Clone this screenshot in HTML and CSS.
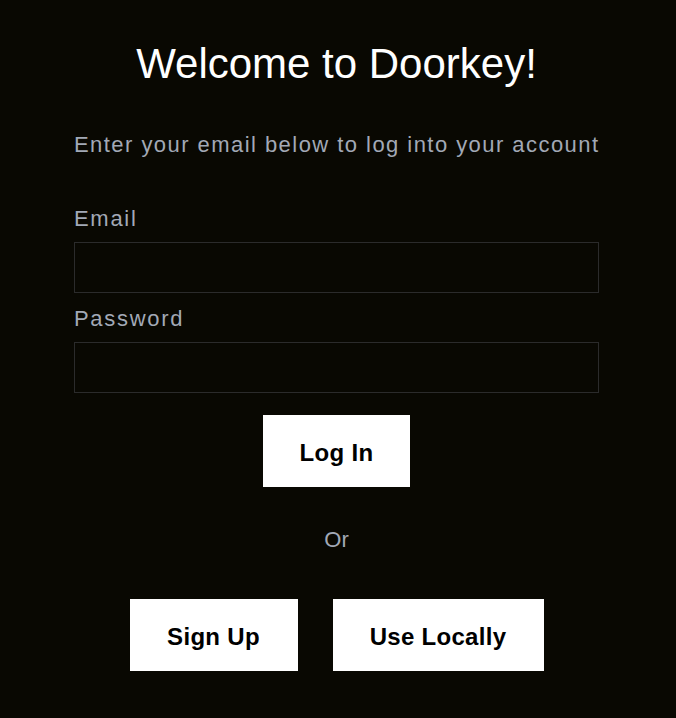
FILE: index.html
```html
<!DOCTYPE html>
<html>
<head>
<meta charset="utf-8">
<link rel="stylesheet" href="styles.css">
</head>
<body>
<main class="page">
  <h1 class="title">Welcome to Doorkey!</h1>
  <p class="subtitle">Enter your email below to log into your account</p>
  <form class="form">
    <label class="label" for="email">Email</label>
    <input class="field" id="email" type="email">
    <label class="label" for="password">Password</label>
    <input class="field" id="password" type="password">
    <div class="row row-login">
      <button class="btn btn-login" type="button">Log In</button>
    </div>
    <div class="or">Or</div>
    <div class="row row-alt">
      <button class="btn btn-signup" type="button">Sign Up</button>
      <button class="btn btn-local" type="button">Use Locally</button>
    </div>
  </form>
</main>
</body>
</html>
```

FILE: styles.css
```css
html, body {
  margin: 0;
  padding: 0;
  background: #090802;
}
body {
  font-family: "Liberation Sans", Arial, sans-serif;
  min-height: 718px;
  padding-right: 3px;
}
.page {
  width: 525px;
  margin: 0 auto;
  padding-top: 40px;
  display: flex;
  flex-direction: column;
}
.title {
  margin: 0;
  font-size: 42px;
  font-weight: normal;
  color: #ffffff;
  text-align: center;
  line-height: 48px;
}
.subtitle {
  margin: 44px 0 0 0;
  font-size: 22px;
  line-height: 26px;
  letter-spacing: 1.45px;
  color: #a2a9b6;
  text-align: left;
  white-space: nowrap;
}
.form {
  display: flex;
  flex-direction: column;
  margin-top: 48px;
}
.label {
  font-size: 22px;
  line-height: 26px;
  letter-spacing: 1.7px;
  color: #a2a9b6;
}
.field {
  box-sizing: border-box;
  width: 525px;
  height: 51px;
  margin: 10px 0 13px 0;
  background: #090802;
  border: 1px solid #2b2b2b;
  padding: 0 10px;
  outline: none;
}
.row {
  display: flex;
  justify-content: center;
}
.row-login {
  margin-top: 9px;
}
.row-alt {
  gap: 35px;
  margin-top: 46px;
}
.btn {
  box-sizing: border-box;
  height: 72px;
  background: #ffffff;
  border: none;
  font-family: "Liberation Sans", Arial, sans-serif;
  font-weight: bold;
  font-size: 24px;
  letter-spacing: 0.3px;
  color: #000000;
  padding: 3px 0 0 0;
}
.btn-login { width: 147px; }
.btn-signup { width: 168px; }
.btn-local { width: 211px; }
.or {
  margin-top: 40px;
  text-align: center;
  font-size: 22px;
  line-height: 26px;
  color: #a2a9b6;
}
```
